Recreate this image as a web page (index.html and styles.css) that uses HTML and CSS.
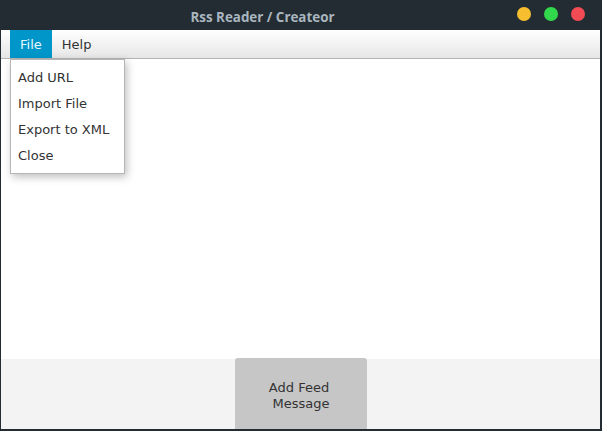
FILE: index.html
```html
<!DOCTYPE html>
<html>
<head>
<meta charset="utf-8">
<link rel="stylesheet" href="styles.css">
</head>
<body>
<div class="window">
  <div class="titlebar">
    <div class="title">Rss Reader / Createor</div>
    <div class="controls">
      <span class="dot yellow"></span>
      <span class="dot green"></span>
      <span class="dot red"></span>
    </div>
  </div>
  <div class="menubar">
    <div class="menu-item active">File</div>
    <div class="menu-item">Help</div>
    <div class="dropdown">
      <div class="dd-item">Add URL</div>
      <div class="dd-item">Import File</div>
      <div class="dd-item">Export to XML</div>
      <div class="dd-item">Close</div>
    </div>
  </div>
  <div class="content"></div>
  <div class="bottom">
    <div class="button">Add Feed<br><span class="line2">Message</span></div>
  </div>
</div>
</body>
</html>
```
FILE: styles.css
```css
html, body {
  margin: 0;
  padding: 0;
  background: #232c33;
}
.window {
  width: 602px;
  height: 431px;
  box-sizing: border-box;
  padding: 0 2px 2px 1px;
  display: flex;
  flex-direction: column;
  background: #232c33;
  font-family: "DejaVu Sans", sans-serif;
  font-size: 13px;
}
.titlebar {
  height: 30px;
  flex: none;
  position: relative;
  display: flex;
  align-items: center;
  justify-content: center;
  padding-right: 76px;
}
.title {
  font-family: "Open Sans", "DejaVu Sans", sans-serif;
  font-weight: bold;
  font-size: 13.4px;
  color: #a9b6bf;
  margin-top: 3px;
}
.controls {
  position: absolute;
  right: 15px;
  top: 7px;
  display: flex;
  gap: 13px;
}
.dot {
  width: 14px;
  height: 14px;
  border-radius: 50%;
  display: block;
}
.yellow { background: #f7bf2f; }
.green { background: #32d84b; }
.red { background: #f24b54; }
.menubar {
  height: 28px;
  flex: none;
  position: relative;
  display: flex;
  padding-left: 9px;
  background: linear-gradient(#ffffff, #e6e6e6);
  border-bottom: 1px solid #b5b5b5;
}
.menu-item {
  padding: 0 10px;
  display: flex;
  align-items: center;
  color: #333;
}
.menu-item.active {
  background: #0096c9;
  color: #eaf6ff;
}
.dropdown {
  position: absolute;
  left: 9px;
  top: 29px;
  width: 113px;
  background: #fff;
  border: 1px solid #b5b5b5;
  box-shadow: 2px 3px 8px rgba(0, 0, 0, 0.25);
  padding: 5px 0 4px;
  z-index: 2;
}
.dd-item {
  height: 26px;
  line-height: 26px;
  padding-left: 7px;
  color: #333;
}
.content {
  flex: 1;
  background: #fff;
}
.bottom {
  height: 70px;
  flex: none;
  background: #f3f3f3;
  display: flex;
  justify-content: center;
}
.button {
  width: 132px;
  margin-top: -1px;
  margin-left: 1px;
  background: #c6c6c6;
  border-radius: 3px 3px 0 0;
  color: #333;
  text-align: center;
  line-height: 16px;
  padding-top: 22px;
  padding-right: 4px;
  box-sizing: border-box;
}
.line2 {
  padding-left: 4px;
}
```
